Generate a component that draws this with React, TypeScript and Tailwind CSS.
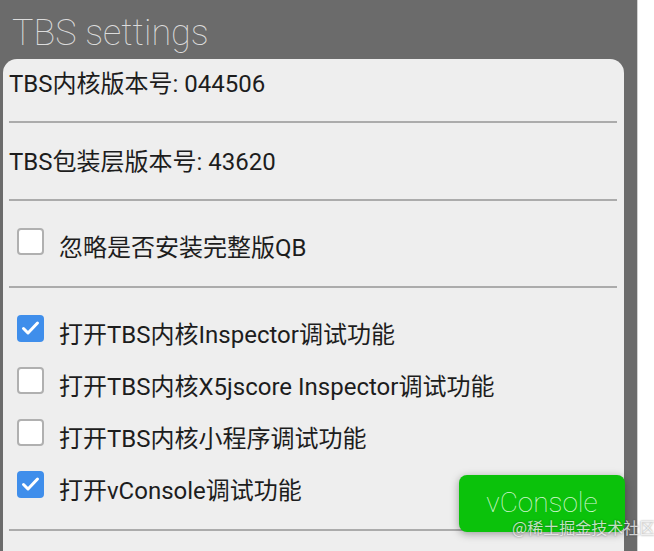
import React from "react";

const font = "font-['Roboto','Noto_Sans_CJK_SC',sans-serif]";

function Checkbox({ checked }: { checked: boolean }) {
  if (checked) {
    return (
      <div className="w-[27px] h-[27px] shrink-0 rounded-[4px] bg-[#3f8eeb] flex items-center justify-center">
        <svg width="27" height="27" viewBox="0 0 27 27" fill="none">
          <path d="M6.5 13.5 L11 18 L20.5 8" stroke="#ffffff" strokeWidth="3" strokeLinecap="round" strokeLinejoin="round" />
        </svg>
      </div>
    );
  }
  return <div className="w-[27px] h-[27px] shrink-0 rounded-[4px] bg-white border-2 border-[#b0b0b0]" />;
}

function Divider() {
  return <div className="h-[2px] bg-[#ababab] shrink-0" />;
}

const debugOptions = [
  { label: "打开TBS内核Inspector调试功能", checked: true },
  { label: "打开TBS内核X5jscore Inspector调试功能", checked: false },
  { label: "打开TBS内核小程序调试功能", checked: false },
  { label: "打开vConsole调试功能", checked: true },
];

export default function App() {
  return (
    <div className={`relative flex w-[654px] h-[551px] overflow-hidden ${font}`}>
      <div className="w-[637px] shrink-0 bg-[#6b6b6b] flex flex-col pl-[3px] pr-[13px]">
        <div className="h-[59px] shrink-0 pt-[15px] pl-[9px] text-[36px] leading-none font-thin text-[#dcdcdc] font-['Roboto',sans-serif]">
          TBS settings
        </div>

        <div className="flex-1 bg-[#eeeeee] rounded-t-[14px] flex flex-col pl-[6px] pr-[7px] text-[24px] leading-[32px] text-[#1d1d1d]">
          <div className="h-[62px] shrink-0 pt-[9px]">TBS内核版本号: 044506</div>
          <Divider />
          <div className="h-[76px] shrink-0 pt-[23px]">TBS包装层版本号: 43620</div>
          <Divider />
          <div className="h-[85px] shrink-0 flex items-start">
            <div className="mt-[27px] ml-[8px]">
              <Checkbox checked={false} />
            </div>
            <div className="mt-[31px] ml-[15px]">忽略是否安装完整版QB</div>
          </div>
          <Divider />
          <div className="pt-[14px] pb-[19px] flex flex-col">
            {debugOptions.map((opt) => (
              <div key={opt.label} className="h-[52px] flex items-start">
                <div className="mt-[13px] ml-[8px]">
                  <Checkbox checked={opt.checked} />
                </div>
                <div className="mt-[17px] ml-[15px] whitespace-nowrap">{opt.label}</div>
              </div>
            ))}
          </div>
          <Divider />
        </div>
      </div>
      <div className="flex-1 bg-white border-l border-[#d0d0d0]" />

      {/* floating vConsole switch */}
      <div className="absolute left-[459px] top-[475px] w-[166px] h-[57px] rounded-[8px] bg-[#0bc20b] shadow-[0_2px_8px_rgba(0,0,0,0.35)] flex items-start justify-center pt-[15px]">
        <span className="text-[28px] leading-[26px] font-thin text-[#d2f6d2] font-['Roboto',sans-serif]">vConsole</span>
      </div>
      <div className="absolute left-[512px] top-[519px] text-[16px] leading-[16px] text-white/75 [text-shadow:0_0_2px_rgba(0,0,0,0.45)] font-['Noto_Sans_CJK_SC',sans-serif] whitespace-nowrap">
        @稀土掘金技术社区
      </div>
    </div>
  );
}
